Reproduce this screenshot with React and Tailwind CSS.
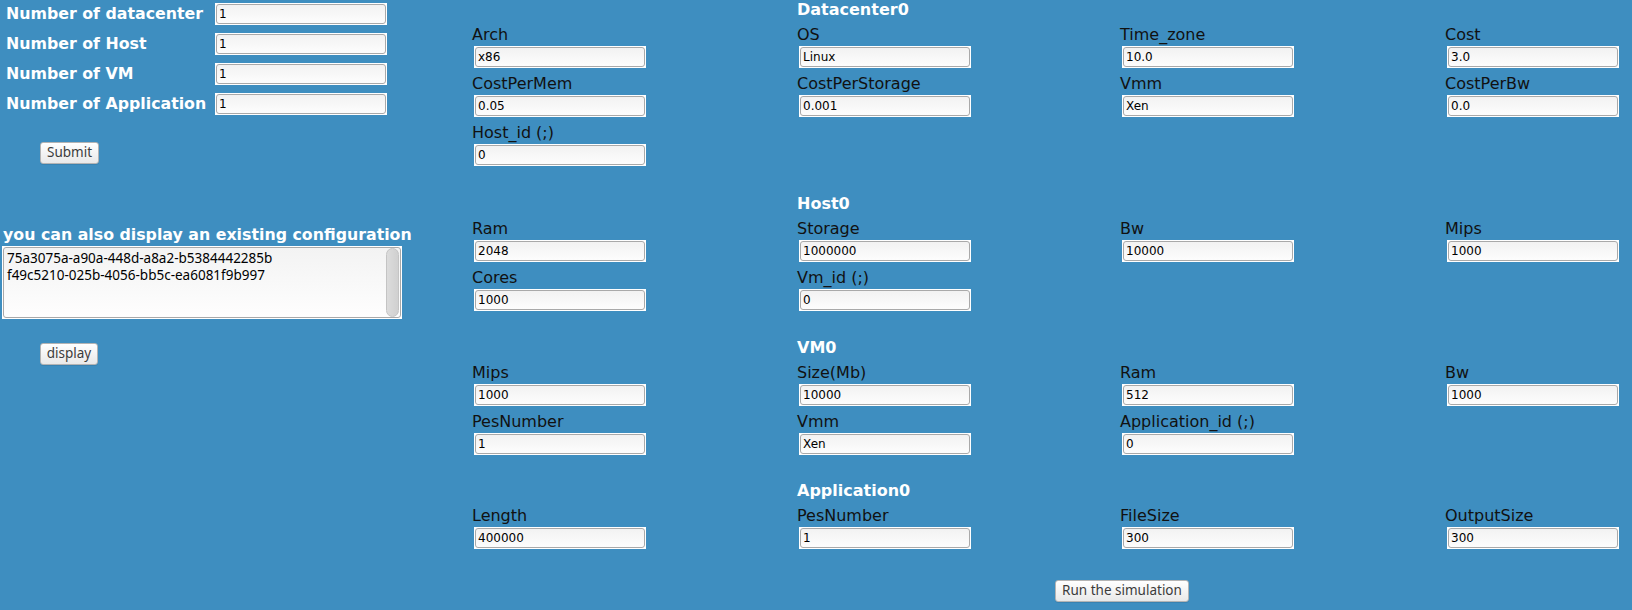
import React from "react";

const dv = "font-['DejaVu_Sans',sans-serif]";
const ns = "font-['Noto_Sans','Open_Sans',sans-serif]";

function Field({ value, className = "" }) {
  return (
    <div className={"w-[172px] h-[22px] bg-white p-px " + className}>
      <input
        defaultValue={value}
        className={
          "block w-full h-full rounded-[3px] border border-[#a9a9a9] bg-gradient-to-b from-[#f2f2f2] to-[#fdfdfd] px-[2px] text-[12px] text-black outline-none " +
          dv
        }
      />
    </div>
  );
}

function Btn({ children, w }) {
  return (
    <button
      className={
        "h-[22px] rounded-[3px] border border-[#b4b4b4] bg-gradient-to-b from-white to-[#e9e9e9] text-[13.5px] leading-none text-[#3c3c3c] shadow-[0_1px_0_rgba(0,0,0,0.08)] " +
        ns +
        " " +
        w
      }
    >
      {children}
    </button>
  );
}

function Section({ title, rows, className = "" }) {
  return (
    <div className={className}>
      <div className="grid grid-cols-[325px_323px_325px_325px]">
        <div />
        <div className={"h-[19px] text-[16px] leading-[19px] font-bold text-white " + dv}>{title}</div>
      </div>
      <div className="mt-[6px] flex flex-col gap-[6px]">
        {rows.map((row, i) => (
          <div key={i} className="grid grid-cols-[325px_323px_325px_325px]">
            {row.map(([label, value], j) => (
              <div key={j} className="flex flex-col">
                <div className={"h-[19px] text-[16px] leading-[19px] text-[#111] " + dv}>{label}</div>
                <Field value={value} className="mt-[2px] ml-[2px]" />
              </div>
            ))}
          </div>
        ))}
      </div>
    </div>
  );
}

export default function App() {
  return (
    <div className="w-full min-h-[610px] overflow-hidden bg-[#3e8ec0]">
      <div className="flex w-[1772px]">
        {/* Left panel */}
        <div className="w-[472px] shrink-0 flex flex-col">
          <div className="pt-[3px] pl-[6px] flex flex-col gap-[8px]">
            {[
              "Number of datacenter",
              "Number of Host",
              "Number of VM",
              "Number of Application",
            ].map((t) => (
              <div key={t} className="flex items-center h-[22px]">
                <div className={"w-[209px] -mt-px text-[15.8px] leading-[19px] font-bold text-white " + dv}>{t}</div>
                <Field value="1" />
              </div>
            ))}
          </div>
          <div className="mt-[27px] pl-[40px] flex">
            <Btn w="w-[59px]">Submit</Btn>
          </div>
          <div className={"mt-[61px] pl-[3px] h-[19px] text-[15.8px] leading-[19px] font-bold text-white whitespace-nowrap " + dv}>
            you can also display an existing configuration
          </div>
          <div className="mt-[2px] ml-[2px] w-[400px] h-[73px] bg-white p-px">
            <div className="flex h-full rounded-[3px] border border-[#a9a9a9] bg-gradient-to-b from-[#f3f3f3] to-[#fefefe]">
              <div className={"flex-1 pl-[3px] pt-[2px] text-[13.5px] leading-[17px] text-black " + ns}>
                <div>75a3075a-a90a-448d-a8a2-b5384442285b</div>
                <div>f49c5210-025b-4056-bb5c-ea6081f9b997</div>
              </div>
              <div className="w-[14px] pr-px">
                <div className="h-full rounded-full border border-[#c4c4c4] bg-gradient-to-r from-[#dcdcdc] to-[#d0d0d0]" />
              </div>
            </div>
          </div>
          <div className="mt-[24px] pl-[40px] flex">
            <Btn w="w-[58px]">display</Btn>
          </div>
        </div>

        {/* Right panel */}
        <div className="w-[1300px] shrink-0">
          <Section
            title="Datacenter0"
            rows={[
              [["Arch", "x86"], ["OS", "Linux"], ["Time_zone", "10.0"], ["Cost", "3.0"]],
              [["CostPerMem", "0.05"], ["CostPerStorage", "0.001"], ["Vmm", "Xen"], ["CostPerBw", "0.0"]],
              [["Host_id (;)", "0"]],
            ]}
          />
          <Section
            className="mt-[28px]"
            title="Host0"
            rows={[
              [["Ram", "2048"], ["Storage", "1000000"], ["Bw", "10000"], ["Mips", "1000"]],
              [["Cores", "1000"], ["Vm_id (;)", "0"]],
            ]}
          />
          <Section
            className="mt-[27px]"
            title="VM0"
            rows={[
              [["Mips", "1000"], ["Size(Mb)", "10000"], ["Ram", "512"], ["Bw", "1000"]],
              [["PesNumber", "1"], ["Vmm", "Xen"], ["Application_id (;)", "0"]],
            ]}
          />
          <Section
            className="mt-[26px]"
            title="Application0"
            rows={[
              [["Length", "400000"], ["PesNumber", "1"], ["FileSize", "300"], ["OutputSize", "300"]],
            ]}
          />
          <div className="mt-[31px] flex justify-center">
            <Btn w="w-[134px]">Run the simulation</Btn>
          </div>
        </div>
      </div>
    </div>
  );
}
